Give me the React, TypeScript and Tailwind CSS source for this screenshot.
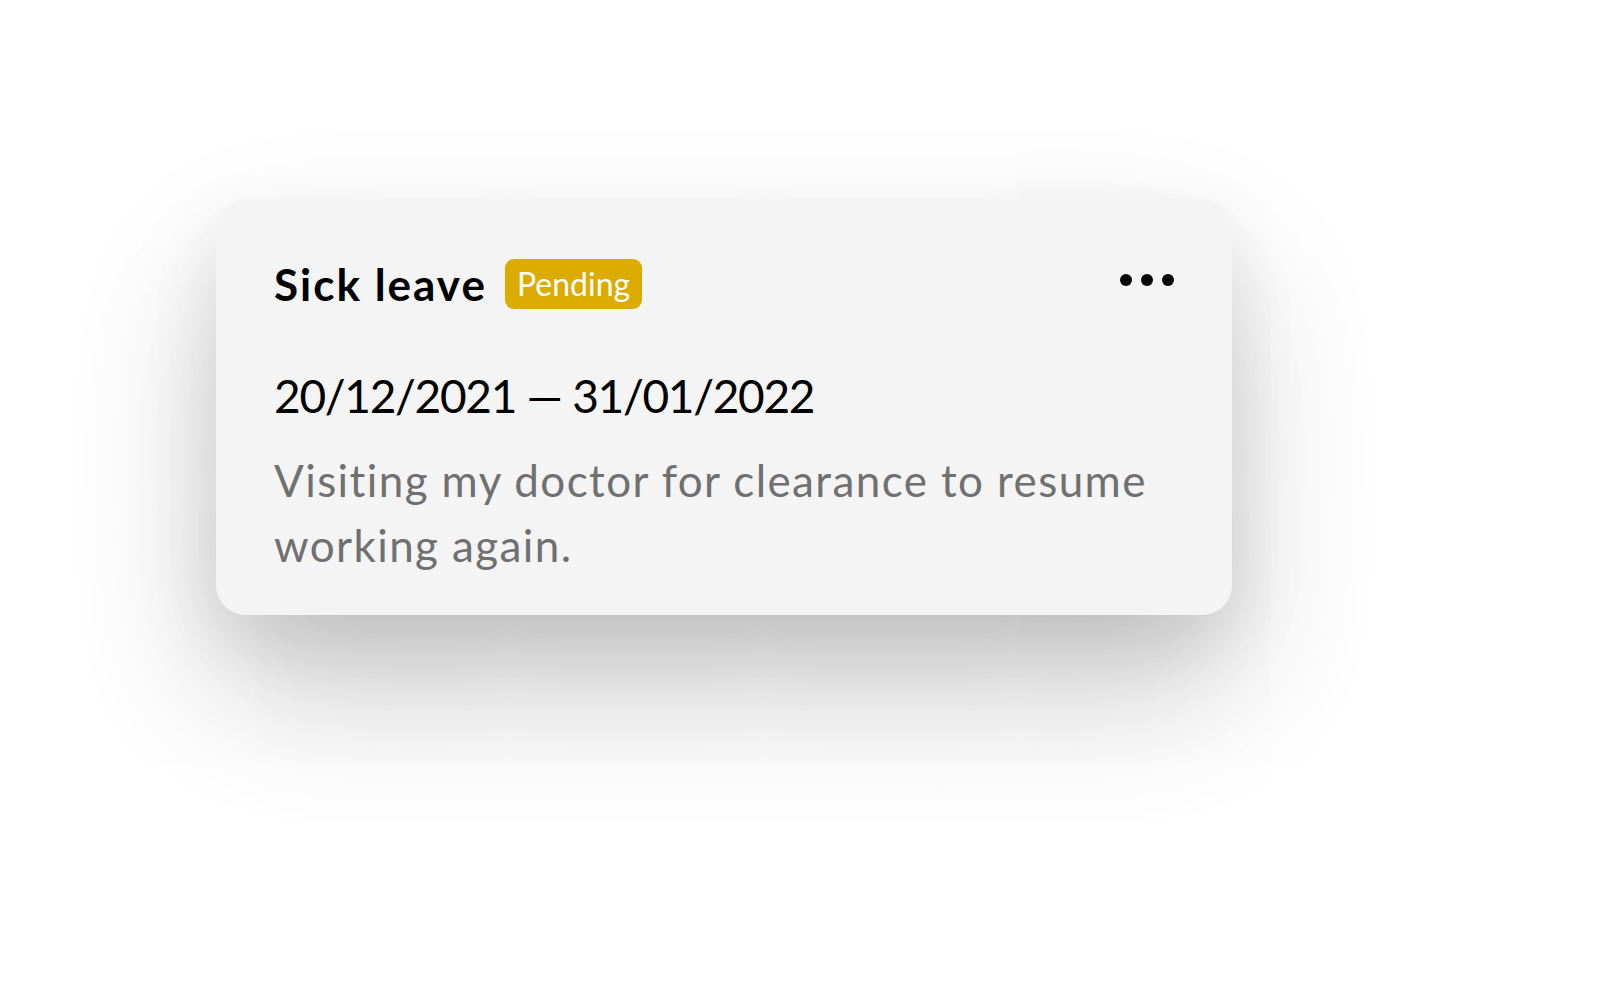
export default function App() {
  return (
    <div className="min-h-screen w-full bg-white pl-[216px] pt-[200px]" style={{ fontFamily: 'Lato, "Open Sans", sans-serif' }}>
      <div className="w-[1016px] h-[415px] rounded-[30px] bg-[#f4f4f4] px-[58px] pt-[59px] shadow-[0_30px_70px_rgba(0,0,0,0.09),0_70px_150px_rgba(0,0,0,0.15),0_80px_170px_rgba(0,0,0,0.07)]">
        {/* Header */}
        <div className="flex items-center justify-between h-[50px]">
          <div className="flex items-center gap-[18px]">
            <h2 className="text-[44px] leading-[50px] font-bold tracking-[2px] text-black">Sick leave</h2>
            <span className="h-[50px] rounded-[9px] bg-[#dcab00] px-[12px] text-[32px] leading-[50px] text-white">Pending</span>
          </div>
          <svg width="56" height="12" viewBox="0 0 56 12" className="mb-[8px] -mr-[2px] fill-black">
            <circle cx="6" cy="6" r="6" />
            <circle cx="27" cy="6" r="6" />
            <circle cx="48" cy="6" r="6" />
          </svg>
        </div>

        <p className="mt-[59px] text-[46px] leading-[56px] tracking-[-1.3px] text-black">20/12/2021 — 31/01/2022</p>
        <p className="mt-[24px] text-[44px] leading-[65px] tracking-[1.4px] text-[#707070]">
          Visiting my doctor for clearance to resume working again.
        </p>
      </div>
    </div>
  );
}
